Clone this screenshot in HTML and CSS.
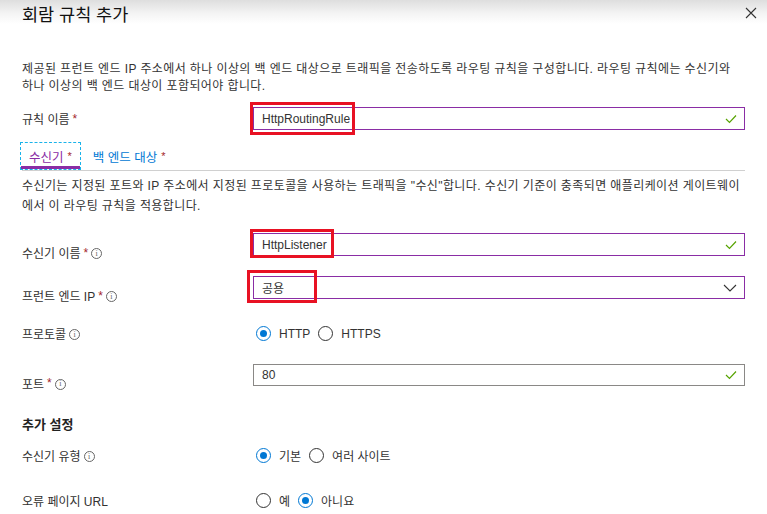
FILE: index.html
```html
<!DOCTYPE html>
<html lang="ko">
<head>
<meta charset="utf-8">
<link rel="stylesheet" href="styles.css">
</head>
<body>
<header class="header">
  <h1 class="title">회람 규칙 추가</h1>
  <svg class="close" width="12" height="12" viewBox="0 0 12 12"><path d="M1 1 L11 11 M11 1 L1 11" stroke="#333" stroke-width="1.1" fill="none"/></svg>
</header>
<main class="content">
  <p class="desc">제공된 프런트 엔드 IP 주소에서 하나 이상의 백 엔드 대상으로 트래픽을 전송하도록 라우팅 규칙을 구성합니다. 라우팅 규칙에는 수신기와 하나 이상의 백 엔드 대상이 포함되어야 합니다.</p>

  <div class="row row-rule">
    <label class="label">규칙 이름 <span class="req">*</span></label>
    <div class="field">
      <div class="input purple"><span>HttpRoutingRule</span><svg class="check" width="12" height="10" viewBox="0 0 12 10"><path d="M1 5 L4.5 8.5 L11 1.5" stroke="#57a300" stroke-width="1.2" fill="none"/></svg></div>
      <div class="hl hl-rule"></div>
    </div>
  </div>

  <div class="tabs">
    <div class="tab active">수신기 <span class="req">*</span></div>
    <div class="tab">백 엔드 대상 <span class="req">*</span></div>
  </div>

  <p class="desc2">수신기는 지정된 포트와 IP 주소에서 지정된 프로토콜을 사용하는 트래픽을 "수신"합니다. 수신기 기준이 충족되면 애플리케이션 게이트웨이에서 이 라우팅 규칙을 적용합니다.</p>

  <div class="row row-listener">
    <label class="label low">수신기 이름 <span class="req">*</span><span class="info">i</span></label>
    <div class="field">
      <div class="input purple"><span>HttpListener</span><svg class="check" width="12" height="10" viewBox="0 0 12 10"><path d="M1 5 L4.5 8.5 L11 1.5" stroke="#57a300" stroke-width="1.2" fill="none"/></svg></div>
      <div class="hl hl-listener"></div>
    </div>
  </div>

  <div class="row row-ip">
    <label class="label low">프런트 엔드 IP <span class="req">*</span><span class="info">i</span></label>
    <div class="field">
      <div class="input purple"><span>공용</span><svg class="chev" width="14" height="8" viewBox="0 0 14 8"><path d="M1 1 L7 7 L13 1" stroke="#333" stroke-width="1.1" fill="none"/></svg></div>
      <div class="hl hl-ip"></div>
    </div>
  </div>

  <div class="row row-proto">
    <label class="label">프로토콜<span class="info">i</span></label>
    <div class="radios">
      <span class="radio on"></span><span class="rtext">HTTP</span>
      <span class="radio"></span><span class="rtext">HTTPS</span>
    </div>
  </div>

  <div class="row row-port">
    <label class="label low">포트 <span class="req">*</span><span class="info">i</span></label>
    <div class="field">
      <div class="input gray"><span>80</span><svg class="check" width="12" height="10" viewBox="0 0 12 10"><path d="M1 5 L4.5 8.5 L11 1.5" stroke="#57a300" stroke-width="1.2" fill="none"/></svg></div>
    </div>
  </div>

  <h2 class="section">추가 설정</h2>

  <div class="row row-type">
    <label class="label">수신기 유형<span class="info">i</span></label>
    <div class="radios">
      <span class="radio on"></span><span class="rtext">기본</span>
      <span class="radio"></span><span class="rtext">여러 사이트</span>
    </div>
  </div>

  <div class="row row-err">
    <label class="label">오류 페이지 URL</label>
    <div class="radios">
      <span class="radio"></span><span class="rtext">예</span>
      <span class="radio on"></span><span class="rtext">아니요</span>
    </div>
  </div>
</main>
</body>
</html>
```

FILE: styles.css
```css
* { box-sizing: border-box; }
html, body { margin: 0; padding: 0; background: #fff; }
body {
  font-family: "Liberation Sans", "Noto Sans CJK KR", sans-serif;
  font-size: 12px;
  color: #323130;
  width: 767px;
  height: 514px;
  overflow: hidden;
}
.header {
  height: 30px;
  display: flex;
  align-items: center;
  justify-content: space-between;
  padding: 0 10px 0 22px;
  background: linear-gradient(#dedede 0%, #f4f4f4 45%, #fff 80%);
}
.title {
  margin: 0;
  font-size: 17.5px;
  font-weight: normal;
  color: #111;
  line-height: 24px;
}
.close { margin-top: -4px; }
.content { padding: 0 22px; }
.desc {
  margin: 31px 0 0;
  line-height: 17px;
  color: #333;
  letter-spacing: 0.4px;
}
.row {
  display: grid;
  grid-template-columns: 231px 1fr;
  align-items: center;
}
.row-rule { margin-top: 12px; }
.row-listener { margin-top: 17px; }
.row-ip { margin-top: 20px; }
.row-proto { margin-top: 26px; }
.row-port { margin-top: 22px; }
.row-type { margin-top: 13px; }
.row-err { margin-top: 28px; }
.label { display: flex; align-items: center; color: #323130; }
.label.low { position: relative; top: 8px; }
.req { color: #a4262c; margin-left: 3px; }
.info {
  display: inline-flex;
  align-items: center;
  justify-content: center;
  width: 11px;
  height: 11px;
  border: 1px solid #666;
  border-radius: 50%;
  font-size: 8px;
  line-height: 1;
  color: #666;
  margin-left: 3px;
  margin-top: 2px;
  font-family: "Liberation Serif", serif;
}
.field { position: relative; }
.input {
  height: 23px;
  display: flex;
  align-items: center;
  justify-content: space-between;
  padding: 0 7px 0 8px;
  border: 1px solid #8a2da5;
  color: #333;
}
.input.gray { border-color: #8a8886; height: 22px; }
.hl {
  position: absolute;
  border: 3px solid #e81123;
}
.hl-rule { left: -3px; top: -5px; width: 105px; height: 33px; }
.hl-listener { left: -3px; top: -4px; width: 84px; height: 29px; }
.hl-ip { left: -6px; top: -6px; width: 70px; height: 33px; }
.tabs {
  margin-top: 12px;
  display: flex;
  align-items: stretch;
  border-bottom: 1px solid #d0d0d0;
}
.tab {
  height: 28px;
  display: flex;
  align-items: center;
  font-size: 12.5px;
  color: #0078d4;
  padding: 0 12px 0 0;
}
.tab.active {
  color: #8a2da5;
  border: 1px dashed #1ab3ea;
  padding: 0 8px 0 8px;
  margin-left: -2px;
  margin-right: 12px;
  box-shadow: inset 0 -3px 0 #8a2da5;
}
.tab .req { margin-left: 4px; font-size: 11px; }
.desc2 {
  margin: 5px 0 0;
  line-height: 20px;
  color: #333;
  letter-spacing: 0.4px;
}
.radios { display: flex; align-items: center; height: 16px; padding-left: 3px; }
.radio {
  width: 15px;
  height: 15px;
  border: 1px solid #333;
  border-radius: 50%;
  display: inline-flex;
  align-items: center;
  justify-content: center;
}
.radio.on { border-color: #0078d4; }
.radio.on::after {
  content: "";
  width: 7px;
  height: 7px;
  border-radius: 50%;
  background: #0078d4;
}
.rtext { margin: 0 8px 0 8px; color: #333; }
.section {
  margin: 30px 0 0;
  font-size: 13px;
  font-weight: 600;
  line-height: 18px;
  color: #222;
}
```
